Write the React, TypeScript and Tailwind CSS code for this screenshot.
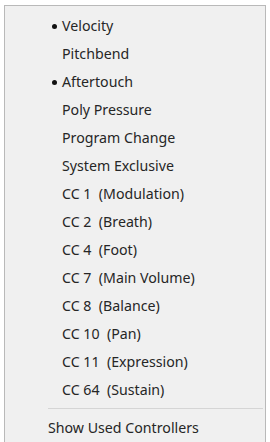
const items = [
  { label: 'Velocity', checked: true },
  { label: 'Pitchbend' },
  { label: 'Aftertouch', checked: true },
  { label: 'Poly Pressure' },
  { label: 'Program Change' },
  { label: 'System Exclusive' },
  { label: 'CC 1  (Modulation)' },
  { label: 'CC 2  (Breath)' },
  { label: 'CC 4  (Foot)' },
  { label: 'CC 7  (Main Volume)' },
  { label: 'CC 8  (Balance)' },
  { label: 'CC 10  (Pan)' },
  { label: 'CC 11  (Expression)' },
  { label: 'CC 64  (Sustain)' },
];

export default function App() {
  return (
    <div className="w-[270px] h-[442px] bg-white overflow-hidden pt-[5px] pl-[4px] font-['Noto_Sans',sans-serif] text-[14.2px] text-[#262626]">
      <div className="w-[262px] h-[460px] bg-[#f0f0f0] border-t border-l border-r border-[#b9b9b9] pt-[6px]">
        {items.map((it) => (
          <div key={it.label} className="h-[28px] flex items-center relative pl-[57px] whitespace-pre">
            {it.checked && (
              <span className="absolute left-[47px] top-[12px] w-[5px] h-[5px] rounded-full bg-[#111]" />
            )}
            {it.label}
          </div>
        ))}
        <div className="mt-[4px] ml-[43px] mr-[2px] h-px bg-[#d5d5d5]" />
        <div className="mt-[5px] h-[28px] flex items-center pl-[43px]">Show Used Controllers</div>
      </div>
    </div>
  );
}
